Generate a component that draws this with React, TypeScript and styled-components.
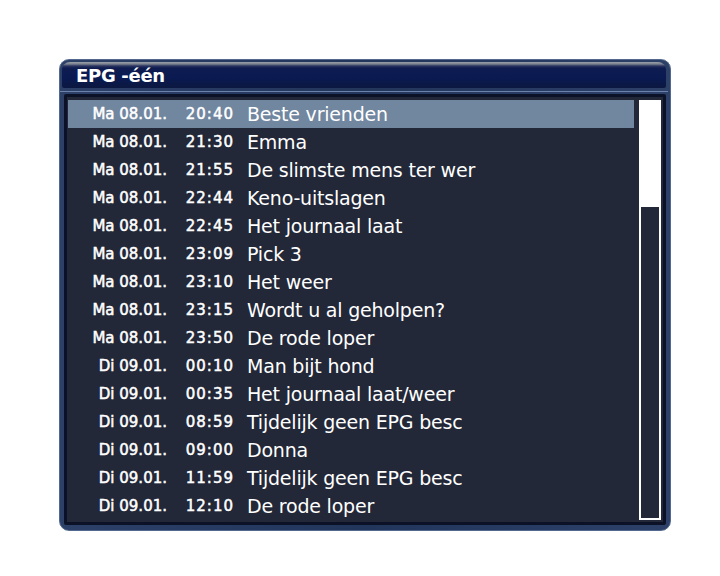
import React from 'react'
import styled, { createGlobalStyle } from 'styled-components'

type Entry = { day: string; time: string; title: string }

const entries: Entry[] = [
  { day: 'Ma 08.01.', time: '20:40', title: 'Beste vrienden' },
  { day: 'Ma 08.01.', time: '21:30', title: 'Emma' },
  { day: 'Ma 08.01.', time: '21:55', title: 'De slimste mens ter wer' },
  { day: 'Ma 08.01.', time: '22:44', title: 'Keno-uitslagen' },
  { day: 'Ma 08.01.', time: '22:45', title: 'Het journaal laat' },
  { day: 'Ma 08.01.', time: '23:09', title: 'Pick 3' },
  { day: 'Ma 08.01.', time: '23:10', title: 'Het weer' },
  { day: 'Ma 08.01.', time: '23:15', title: 'Wordt u al geholpen?' },
  { day: 'Ma 08.01.', time: '23:50', title: 'De rode loper' },
  { day: 'Di 09.01.', time: '00:10', title: 'Man bijt hond' },
  { day: 'Di 09.01.', time: '00:35', title: 'Het journaal laat/weer' },
  { day: 'Di 09.01.', time: '08:59', title: 'Tijdelijk geen EPG besc' },
  { day: 'Di 09.01.', time: '09:00', title: 'Donna' },
  { day: 'Di 09.01.', time: '11:59', title: 'Tijdelijk geen EPG besc' },
  { day: 'Di 09.01.', time: '12:10', title: 'De rode loper' },
]

const App: React.FC = () =>
  <>
    <GlobalStyle />
    <Page>
      <Window>
        <TitleBar>EPG -één</TitleBar>
        <Divider />
        <Body>
          <List>
            {entries.map((e, i) =>
              <Row key={i} $selected={i === 0}>
                <Day>{e.day}</Day>
                <Time>{e.time}</Time>
                <Title>{e.title}</Title>
              </Row>
            )}
          </List>
          <Scrollbar>
            <Thumb />
          </Scrollbar>
        </Body>
      </Window>
    </Page>
  </>

const GlobalStyle = createGlobalStyle`
  body {
    margin: 0;
    background: #ffffff;
    font-family: "DejaVu Sans", sans-serif;
  }
`

const Page = styled.div`
  padding: 59px 0 0 59px;
`

const Window = styled.div`
  box-sizing: border-box;
  width: 612px;
  height: 472px;
  padding: 2px 4px 5px 4px;
  border-radius: 10px;
  border: 1px solid #52688e;
  background: linear-gradient(90deg, #2c4068 0%, #22365c 50%, #2c4068 100%);
  display: flex;
  flex-direction: column;
`

const TitleBar = styled.div`
  height: 26px;
  box-sizing: border-box;
  margin: 0 0 0 -2px;
  padding: 3px 0 0 14px;
  border-radius: 8px 8px 2px 2px;
  background: linear-gradient(180deg, #9aa0a8 0px, #7a828e 2px, #2a3460 4px, #0e1c50 6px, #0a1a52 60%, #0c1840 100%);
  color: #ffffff;
  font-weight: bold;
  font-size: 18px;
  line-height: 21px;
  letter-spacing: -0.3px;
`

const Divider = styled.div`
  height: 1px;
  margin: 3px -2px 2px -4px;
  background: #6c82aa;
`

const Body = styled.div`
  flex: 1;
  display: flex;
  gap: 5px;
  padding: 3px 2px 2px 1px;
  border: 3px solid #0b1228;
  border-radius: 2px;
  background: #232838;
`

const List = styled.div`
  flex: 1;
  display: flex;
  flex-direction: column;
`

const Row = styled.div<{ $selected: boolean }>`
  height: 28px;
  display: flex;
  align-items: center;
  color: #ffffff;
  background: ${ p => p.$selected ? '#71869f' : 'transparent' };
`

const Day = styled.span`
  width: 99px;
  text-align: right;
  font-size: 15px;
  -webkit-text-stroke: 0.5px #ffffff;
`

const Time = styled.span`
  width: 67px;
  text-align: right;
  font-size: 15px;
  letter-spacing: 1px;
  -webkit-text-stroke: 0.5px #ffffff;
`

const Title = styled.span`
  margin-left: 13px;
  font-size: 19px;
  letter-spacing: -0.2px;
  white-space: nowrap;
`

const Scrollbar = styled.div`
  width: 22px;
  box-sizing: border-box;
  border: 2px solid #ffffff;
  display: flex;
  flex-direction: column;
`

const Thumb = styled.div`
  height: 105px;
  background: #ffffff;
`

export default App
